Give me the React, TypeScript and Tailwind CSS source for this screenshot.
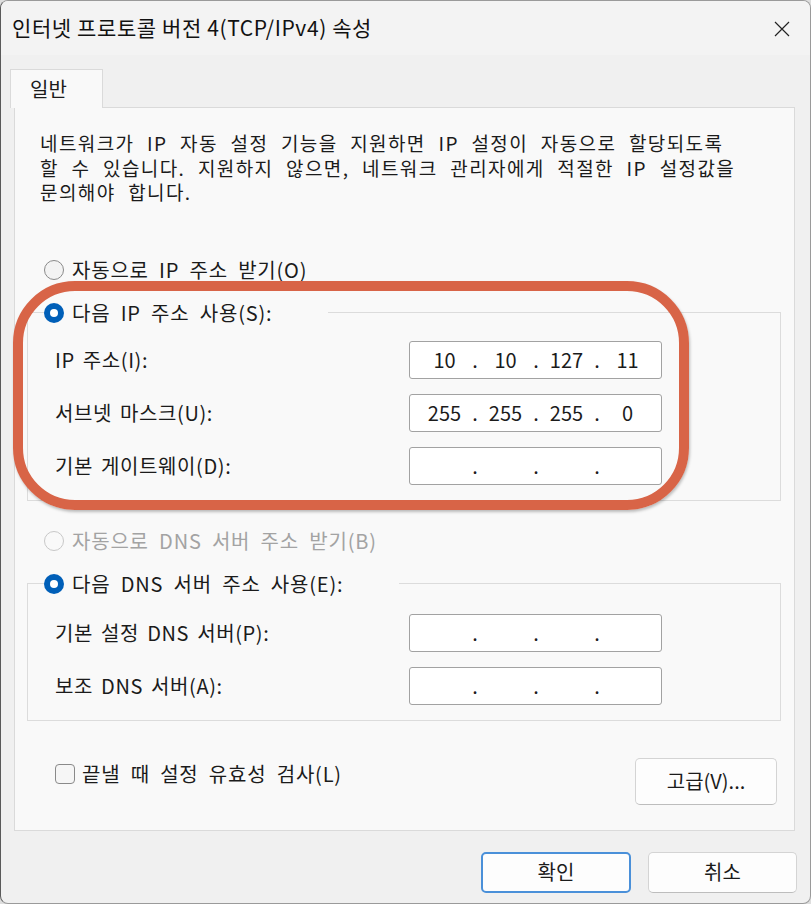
import React from "react";

const FONT = { fontFamily: '"Noto Sans CJK KR", "Noto Sans", sans-serif' };

function Radio({ state }: { state: "on" | "off" | "disabled" }) {
  if (state === "on")
    return (
      <span className="flex h-[20px] w-[20px] shrink-0 items-center justify-center rounded-full bg-[#005fb8]">
        <span className="h-[8px] w-[8px] rounded-full bg-white" />
      </span>
    );
  if (state === "disabled")
    return <span className="h-[20px] w-[20px] shrink-0 rounded-full border border-[#c8c8c8] bg-[#f9f9f9]" />;
  return <span className="h-[20px] w-[20px] shrink-0 rounded-full border border-[#8a8a8a] bg-[#f3f3f3]" />;
}

function IpField({ parts }: { parts: string[] }) {
  return (
    <div className="flex h-[38px] w-[253px] items-center rounded-[3px] border border-[#a2a2a2] bg-white pl-[9px] text-[20px] tracking-normal text-[#1b1b1b] [word-spacing:0px]">
      {parts.map((p, i) => (
        <React.Fragment key={i}>
          <span className="w-[51px] text-center">{p}</span>
          {i < 3 && <span className="w-[10px] text-center">.</span>}
        </React.Fragment>
      ))}
    </div>
  );
}

function Row({ label, parts }: { label: string; parts: string[] }) {
  return (
    <div className="flex items-center">
      <span className="w-[354px] text-[20px] leading-[24px] tracking-[0.6px] text-[#1b1b1b] [word-spacing:3px]">{label}</span>
      <IpField parts={parts} />
    </div>
  );
}

export default function App() {
  return (
    <div className="h-[904px] w-[811px] bg-[#dedede]" style={FONT}>
      <div className="flex h-[904px] w-[811px] flex-col overflow-hidden rounded-[8px] border border-[#9a9a9a] border-l-[#5a5a5a] bg-[#f0f0f0]">
        {/* Title bar */}
        <div className="flex h-[54px] shrink-0 items-center justify-between bg-[#f3f3f3] pl-[11px] pr-[20px]">
          <span className="text-[21px] tracking-[0.6px] text-[#111]">인터넷 프로토콜 버전 4(TCP/IPv4) 속성</span>
          <svg width="16" height="16" viewBox="0 0 16 16" className="mt-[2px]">
            <path d="M1 1 L15 15 M15 1 L1 15" stroke="#222" strokeWidth="1.2" />
          </svg>
        </div>

        {/* Body */}
        <div className="flex flex-col pl-[13px] pr-[15px] pt-[14px]">
          <div className="relative z-10 -mb-px ml-[-4px] flex h-[39px] w-[93px] items-center border border-b-0 border-[#dadada] bg-[#f9f9f9] pl-[19px] text-[20px] text-[#1b1b1b]">
            일반
          </div>

          {/* Panel */}
          <div className="relative flex flex-col border border-[#dadada] bg-[#f9f9f9] pb-[25px] pl-[12px] pr-[13px] pt-[23px] text-[#1b1b1b]">
            <div className="ml-[13px] whitespace-pre text-[19px] leading-[24.5px] tracking-[1.4px] [word-spacing:7px]">
              <div>네트워크가 IP 자동 설정 기능을 지원하면 IP 설정이 자동으로 할당되도록</div>
              <div>할 수 있습니다. 지원하지 않으면, 네트워크 관리자에게 적절한 IP 설정값을</div>
              <div>문의해야 합니다.</div>
            </div>

            <div className="ml-[17px] mt-[53px] flex h-[24px] items-center gap-[8px] text-[20px] tracking-[0.8px] [word-spacing:5px]">
              <Radio state="off" />
              <span>자동으로 IP 주소 받기(O)</span>
            </div>

            <fieldset className="mt-[19px] border border-[#dcdcdc] pb-[15px] pt-[16px]">
              <legend className="ml-[16px] flex h-[24px] items-center gap-[8px] pr-[56px] text-[20px] tracking-[0.8px] [word-spacing:5px]">
                <Radio state="on" />
                <span>다음 IP 주소 사용(S):</span>
              </legend>
              <div className="flex flex-col gap-[15px] pl-[27px]">
                <Row label="IP 주소(I):" parts={["10", "10", "127", "11"]} />
                <Row label="서브넷 마스크(U):" parts={["255", "255", "255", "0"]} />
                <Row label="기본 게이트웨이(D):" parts={["", "", "", ""]} />
              </div>
            </fieldset>

            <div className="ml-[17px] mt-[28px] flex h-[24px] items-center gap-[8px] text-[20px] tracking-[0.8px] text-[#a3a3a3] [word-spacing:5px]">
              <Radio state="disabled" />
              <span>자동으로 DNS 서버 주소 받기(B)</span>
            </div>

            <fieldset className="mt-[19px] border border-[#dcdcdc] pb-[15px] pt-[18px]">
              <legend className="ml-[16px] flex h-[24px] items-center gap-[8px] pr-[56px] text-[20px] tracking-[0.8px] [word-spacing:5px]">
                <Radio state="on" />
                <span>다음 DNS 서버 주소 사용(E):</span>
              </legend>
              <div className="flex flex-col gap-[15px] pl-[27px]">
                <Row label="기본 설정 DNS 서버(P):" parts={["", "", "", ""]} />
                <Row label="보조 DNS 서버(A):" parts={["", "", "", ""]} />
              </div>
            </fieldset>

            <div className="mt-[37px] flex items-start justify-between">
              <div className="ml-[28px] mt-[4px] flex h-[24px] items-center gap-[7px] text-[20px] tracking-[0.8px] [word-spacing:5px]">
                <span className="h-[20px] w-[20px] rounded-[4px] border border-[#8a8a8a] bg-[#f6f6f6]" />
                <span>끝낼 때 설정 유효성 검사(L)</span>
              </div>
              <button className="mr-[4px] flex h-[47px] w-[142px] items-center justify-center rounded-[5px] border border-[#d4d4d4] border-b-[#bdbdbd] bg-[#fdfdfd] text-[20px] text-[#1b1b1b]">
                고급(V)...
              </button>
            </div>

            {/* annotation ring */}
            <div className="pointer-events-none absolute left-[-2px] top-[173px] h-[229px] w-[676px] rounded-[62px] border-[10px] border-[#d86447] shadow-[1px_2px_3px_rgba(0,0,0,0.25)]" />
          </div>

          {/* Bottom buttons */}
          <div className="mt-[21px] flex justify-end gap-[17px]">
            <button className="flex h-[41px] w-[150px] items-center justify-center rounded-[5px] border-2 border-[#4a90d9] bg-[#fdfdfd] text-[20px] text-[#1b1b1b]">
              확인
            </button>
            <button className="mr-[-2px] flex h-[41px] w-[149px] items-center justify-center rounded-[5px] border border-[#d4d4d4] border-b-[#bdbdbd] bg-[#fdfdfd] text-[20px] text-[#1b1b1b]">
              취소
            </button>
          </div>
        </div>
      </div>
    </div>
  );
}
